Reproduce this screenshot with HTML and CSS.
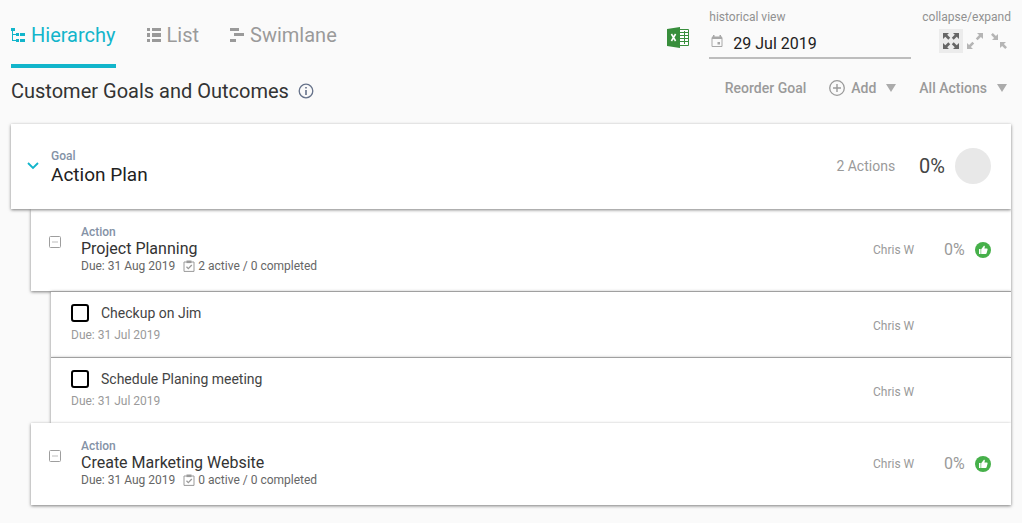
FILE: index.html
```html
<!DOCTYPE html>
<html lang="en">
<head>
  <meta charset="UTF-8">
  <title>Customer Goals and Outcomes</title>
  <meta name="viewport" content="width=device-width, initial-scale=1.0">
  <link rel="stylesheet" href="styles.css">
</head>
<body>
  <!-- shared icons -->
  <svg class="sprite" aria-hidden="true">
    <symbol id="clipboard" viewBox="0 0 12 12">
      <path d="M1 2h10v9.4H1z" fill="none" stroke="currentColor"/>
      <path d="M3.5.5h5v2.6h-5z" fill="currentColor"/>
      <path d="M3.5 6.8l1.8 1.8L8.8 5" fill="none" stroke="currentColor" stroke-width="1.3"/>
    </symbol>
    <symbol id="thumb" viewBox="0 0 16 16">
      <circle cx="8" cy="8" r="8" fill="#46b04a"/>
      <path d="M4 7h1.6v5H4zM6.2 7.2l2.7-3.5c.8 0 1.1.6.9 1.2L9.4 6.4h2.3c.7 0 1.1.6.9 1.2l-1 3.6c-.2.5-.5.8-1 .8H6.2z" fill="#fff"/>
    </symbol>
    <symbol id="out" viewBox="0 0 16 16">
      <path d="M10 0h6v6l-2.1-2.1-3.3 3.3-1.8-1.8 3.3-3.3zM6 16H0v-6l2.1 2.1 3.3-3.3 1.8 1.8-3.3 3.3z" fill="currentColor"/>
    </symbol>
  </svg>

  <header class="top-bar">
    <nav class="tabs">
      <a href="#hierarchy" class="tab active">
        <svg width="14" height="14" viewBox="0 0 14 14"><path d="M0 0h4v3H0zM1 3h1v10H1zM2 6h3v1H2zM2 12h3v1H2zM5 5h3v3H5zM9 5h5v3H9zM5 11h3v3H5zM9 11h5v3H9z" fill="currentColor"/></svg>
        Hierarchy
      </a>
      <a href="#list" class="tab">
        <svg width="14" height="14" viewBox="0 0 14 14"><path d="M0 0h3v3H0zM0 5h3v4H0zM0 11h3v3H0zM5 0h9v3H5zM5 5h9v4H5zM5 11h9v3H5z" fill="currentColor"/></svg>
        List
      </a>
      <a href="#swimlane" class="tab">
        <svg width="14" height="14" viewBox="0 0 14 14"><path d="M0 0h9v3H0zM4 5h10v3H4zM0 11h6v3H0z" fill="currentColor"/></svg>
        Swimlane
      </a>
    </nav>

    <div class="view-tools">
      <button class="icon-btn" aria-label="Export to Excel">
        <svg width="22" height="22" viewBox="0 0 22 22">
          <path d="M12 2.5h9.5v16H12z" fill="#fff" stroke="#388e3c"/>
          <path d="M13 5.5h8M13 8.5h8M13 11.5h8M13 14.5h8M17.5 4v13" stroke="#388e3c"/>
          <path d="M0 2l13-2v21L0 19z" fill="#388e3c"/>
          <path d="M4.4 7l4.2 7M8.6 7l-4.2 7" stroke="#fff" stroke-width="1.6"/>
        </svg>
      </button>
      <div class="history">
        <label for="historyDate">historical view</label>
        <div class="date-field">
          <svg width="12" height="12" viewBox="0 0 12 12"><path d="M1 2.5h10v9H1z" fill="none" stroke="currentColor"/><path d="M1 1.5h10V4H1zM2 0h1.5v2H2zM8.5 0H10v2H8.5zM6.5 7H9v2.5H6.5z" fill="currentColor"/></svg>
          <input type="text" id="historyDate" value="29 Jul 2019">
        </div>
      </div>
      <div class="expand">
        <span>collapse/expand</span>
        <div class="expand-buttons">
          <button class="icon-btn active" aria-label="Expand all">
            <svg width="16" height="16" viewBox="0 0 16 16"><path id="corner" d="M0 0h6L4.2 1.8l3 3-1.9 1.9-3-3L0 6z" fill="currentColor"/><use href="#corner" transform="matrix(-1 0 0 1 16 0)"/><use href="#corner" transform="matrix(1 0 0 -1 0 16)"/><use href="#corner" transform="rotate(180 8 8)"/></svg>
          </button>
          <button class="icon-btn" aria-label="Expand">
            <svg width="16" height="16"><use href="#out"/></svg>
          </button>
          <button class="icon-btn" aria-label="Collapse">
            <svg width="16" height="16" viewBox="0 0 16 16"><path d="M7 1v6H1l2.1-2.1L0 1.8 1.8 0l3.1 3.1zM9 15V9h6l-2.1 2.1 3.1 3.1-1.8 1.8-3.1-3.1z" fill="currentColor"/></svg>
          </button>
        </div>
      </div>
    </div>
  </header>

  <div class="title-bar">
    <h1>Customer Goals and Outcomes
      <svg width="16" height="16" viewBox="0 0 16 16"><circle cx="8" cy="8" r="6.8" fill="none" stroke="currentColor" stroke-width="1.3"/><path d="M7.2 7h1.6v5H7.2zM7.2 4h1.6v1.6H7.2z" fill="currentColor"/></svg>
    </h1>
    <div class="actions">
      <button class="text-btn">Reorder Goal</button>
      <button class="text-btn">
        <svg width="16" height="16" viewBox="0 0 16 16"><path d="M8 4v8M4 8h8" stroke="currentColor" stroke-width="1.4"/><circle cx="8" cy="8" r="7.3" fill="none" stroke="currentColor" stroke-width="1.3"/></svg>
        Add <span class="caret"></span>
      </button>
      <button class="text-btn">All Actions <span class="caret"></span></button>
    </div>
  </div>

  <main>
    <section class="card goal">
      <button class="toggle" aria-label="Collapse goal">
        <svg width="12" height="8" viewBox="0 0 12 8"><path d="M1 1l5 5 5-5" fill="none" stroke="#12b5cb" stroke-width="1.8"/></svg>
      </button>
      <div class="info">
        <div class="type">Goal</div>
        <h2>Action Plan</h2>
      </div>
      <div class="count">2 Actions</div>
      <div class="percent">0%</div>
      <div class="progress"></div>
    </section>

    <section class="card action">
      <button class="toggle" aria-label="Collapse action">
        <svg width="12" height="12" viewBox="0 0 12 12"><rect x=".5" y=".5" width="11" height="11" rx="1" fill="none" stroke="#9e9e9e"/><path d="M3 6h6" stroke="#bdbdbd"/></svg>
      </button>
      <div class="info">
        <div class="type">Action</div>
        <h3>Project Planning</h3>
        <div class="meta">Due: 31 Aug 2019 <svg width="12" height="12"><use href="#clipboard"/></svg> 2 active / 0 completed</div>
      </div>
      <div class="owner">Chris W</div>
      <div class="percent">0%</div>
      <svg width="16" height="16"><use href="#thumb"/></svg>
    </section>

    <section class="card task">
      <div class="info">
        <label><input type="checkbox"> Checkup on Jim</label>
        <div class="due">Due: 31 Jul 2019</div>
      </div>
      <div class="owner">Chris W</div>
    </section>

    <section class="card task">
      <div class="info">
        <label><input type="checkbox"> Schedule Planing meeting</label>
        <div class="due">Due: 31 Jul 2019</div>
      </div>
      <div class="owner">Chris W</div>
    </section>

    <section class="card action">
      <button class="toggle" aria-label="Collapse action">
        <svg width="12" height="12" viewBox="0 0 12 12"><rect x=".5" y=".5" width="11" height="11" rx="1" fill="none" stroke="#9e9e9e"/><path d="M3 6h6" stroke="#bdbdbd"/></svg>
      </button>
      <div class="info">
        <div class="type">Action</div>
        <h3>Create Marketing Website</h3>
        <div class="meta">Due: 31 Aug 2019 <svg width="12" height="12"><use href="#clipboard"/></svg> 0 active / 0 completed</div>
      </div>
      <div class="owner">Chris W</div>
      <div class="percent">0%</div>
      <svg width="16" height="16"><use href="#thumb"/></svg>
    </section>
  </main>
</body>
</html>
```

FILE: styles.css
```css
* {
  box-sizing: border-box;
}
body {
  margin: 0;
  padding: 0 11px 16px;
  background: #fafafa;
  color: #333;
  font-family: Roboto, sans-serif;
  font-size: 12px;
  line-height: 16px;
}
h1, h2, h3 {
  margin: 0;
  font-weight: 400;
}
svg {
  display: block;
  flex: none;
}
.sprite {
  display: none;
}
button {
  display: flex;
  align-items: center;
  padding: 0;
  border: none;
  background: none;
  color: inherit;
  font: inherit;
  cursor: pointer;
}

.top-bar {
  display: flex;
  justify-content: space-between;
  height: 68px;
}
.tabs {
  display: flex;
  gap: 31px;
}
.tab {
  display: flex;
  align-items: center;
  gap: 6px;
  padding-top: 6px;
  border-bottom: 4px solid transparent;
  color: #9a9a9a;
  font-size: 20px;
  line-height: 24px;
  text-decoration: none;
}
.tab.active {
  color: #12b5cb;
  border-color: #12b5cb;
}

.view-tools {
  display: flex;
  align-items: flex-start;
  padding-top: 9px;
  color: #919191;
}
.view-tools > .icon-btn {
  margin: 18px 20px 0 0;
}
.history {
  width: 202px;
  margin-right: 11px;
}
.history label {
  display: block;
}
.date-field {
  display: flex;
  align-items: center;
  gap: 10px;
  height: 34px;
  padding-left: 2px;
  border-bottom: 2px solid #bdbdbd;
}
.date-field svg {
  color: #a8a8a8;
}
.date-field input {
  width: 100%;
  padding: 4px 0 0;
  border: none;
  outline: none;
  background: none;
  color: #212121;
  font: inherit;
  font-size: 16px;
}
.expand-buttons {
  display: flex;
  justify-content: flex-end;
  margin-top: 4px;
}
.expand-buttons .icon-btn {
  justify-content: center;
  width: 24px;
  height: 24px;
  color: #b5b5b5;
}
.expand-buttons .active {
  background: #ececec;
  color: #666;
}

.title-bar {
  display: flex;
  justify-content: space-between;
  padding: 8px 4px 18px 0;
}
h1 {
  display: flex;
  align-items: center;
  gap: 9px;
  font-size: 20px;
  line-height: 30px;
}
h1 svg {
  color: #66728a;
}
.actions {
  display: flex;
  align-items: center;
  gap: 23px;
  height: 24px;
}
.text-btn {
  gap: 6px;
  color: #9a9a9a;
  font-size: 14px;
  font-weight: 500;
}
.caret {
  margin-left: 4px;
  border: 5px solid transparent;
  border-top: 8px solid #ababab;
  border-bottom: none;
}

.card {
  display: flex;
  align-items: center;
  padding-right: 20px;
  background: #fff;
  box-shadow: 0 1px 3px rgba(0, 0, 0, 0.5);
}
.info {
  flex: 1;
}
.type {
  color: #8492a6;
  font-weight: 500;
}
.goal {
  position: relative;
  height: 85px;
  padding: 0 20px 2px 16px;
}
.goal .info {
  padding-top: 2px;
}
.goal .toggle {
  margin-right: 12px;
}
.goal h2 {
  color: #212121;
  font-size: 19px;
  line-height: 22px;
}
.count {
  color: #9a9a9a;
  font-size: 14px;
}
.goal .percent {
  margin: 0 10px 0 24px;
  color: #444;
  font-size: 20px;
}
.progress {
  width: 36px;
  height: 36px;
  border-radius: 50%;
  background: #e8e8e8;
}

.action {
  height: 82px;
  margin-left: 20px;
  padding-left: 18px;
}
.action .info {
  padding-bottom: 2px;
}
.action .toggle {
  align-self: flex-start;
  margin: 27px 20px 0 0;
}
.action h3 {
  font-size: 16px;
  line-height: 18px;
}
.meta {
  display: flex;
  align-items: center;
  gap: 3px;
  color: #666;
}
.meta svg {
  margin-left: 5px;
  color: #9a9a9a;
}
.owner {
  width: 71px;
  color: #9a9a9a;
}
.action .percent {
  width: 31px;
  color: #9a9a9a;
  font-size: 16px;
}

.task {
  height: 66px;
  margin-left: 40px;
  padding: 2px 67px 0 20px;
  border-top: 1px solid #a0a0a0;
}
.task .info {
  align-self: flex-start;
  padding-top: 10px;
}
.task .owner {
  width: 51px;
  margin-right: 20px;
}
.task label {
  display: flex;
  align-items: center;
  gap: 12px;
  color: #444;
  font-size: 14px;
}
.task input {
  width: 18px;
  height: 18px;
  margin: 0;
  border: 2px solid #000;
  border-radius: 3px;
  appearance: none;
}
.due {
  margin-top: 5px;
  color: #9a9a9a;
}
```
